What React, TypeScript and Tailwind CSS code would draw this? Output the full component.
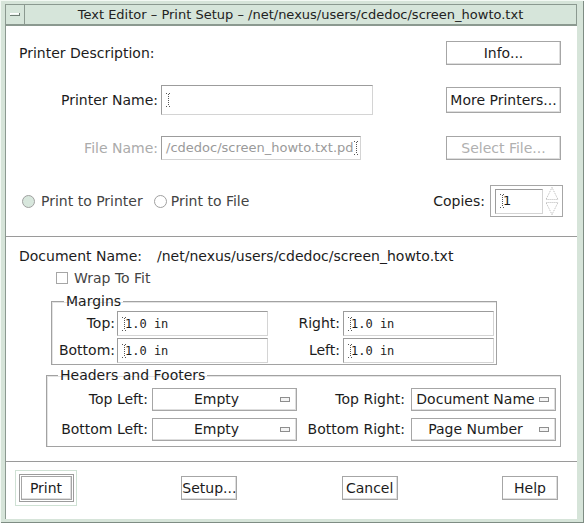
import React from "react";

const sans = "font-['DejaVu_Sans',sans-serif]";
const mono = "font-['DejaVu_Sans_Mono',monospace]";

function Caret() {
  return (
    <svg width="5" height="14" viewBox="0 0 5 14" className="shrink-0">
      <path d="M0 0.5h2M3 0.5h2M2.5 1v12M0 13.5h2M3 13.5h2" stroke="#555" strokeWidth="1" strokeDasharray="1 1" fill="none" />
    </svg>
  );
}

function Btn({ children, className = "", disabled = false }: { children: React.ReactNode; className?: string; disabled?: boolean }) {
  return (
    <div
      className={`flex items-center justify-center border border-[#a6a6a6] bg-white text-[14px] shadow-[inset_-1px_-1px_0_#dedede] ${
        disabled ? "text-[#b0b0b0]" : "text-[#1c1c1c]"
      } ${className}`}
    >
      {children}
    </div>
  );
}

function Field({ children, className = "" }: { children?: React.ReactNode; className?: string }) {
  return (
    <div
      className={`flex items-center overflow-hidden border border-t-[#9c9c9c] border-l-[#9c9c9c] border-r-[#d4d4d4] border-b-[#d4d4d4] bg-white pl-[4px] ${className}`}
    >
      {children}
    </div>
  );
}

function MarginField({ value }: { value: string }) {
  return (
    <Field className="h-[25px] w-[151px]">
      <Caret />
      <span className={`${mono} -ml-[2px] text-[12px] text-[#1c1c1c]`}>{value}</span>
    </Field>
  );
}

function OptionMenu({ value }: { value: string }) {
  return (
    <div className="flex h-[23px] w-[145px] items-center border border-[#a6a6a6] bg-white pr-[6px] shadow-[inset_-1px_-1px_0_#dedede]">
      <span className="flex-1 text-center text-[14px] text-[#1c1c1c]">{value}</span>
      <span className="h-[5px] w-[10px] border border-[#8e8e8e] bg-[#f4f4f4]" />
    </div>
  );
}

function Group({
  title,
  className = "",
  legendClass = "",
  children,
}: {
  title: string;
  className?: string;
  legendClass?: string;
  children: React.ReactNode;
}) {
  return (
    <fieldset className={`border border-[#a2a2a2] shadow-[inset_1px_1px_0_#e4e4e4] ${className}`}>
      <legend className={`px-[2px] text-[14px] leading-[16px] text-[#1c1c1c] ${legendClass}`}>{title}</legend>
      {children}
    </fieldset>
  );
}

export default function App() {
  return (
    <div
      className={`${sans} flex h-[523px] w-[584px] flex-col bg-[#d6e4d9] pb-[4px] pl-[5px] pr-[7px] pt-[4px] text-[#1c1c1c] shadow-[inset_1px_1px_0_#f3f9f4,inset_-1px_-1px_0_#7e8c83]`}
    >
      {/* title bar */}
      <div className="flex h-[21px] shrink-0 border border-[#8b9990] bg-[#d6e5da]">
        <div className="flex w-[19px] items-center justify-center border-r border-[#8b9990]">
          <span className="h-[3px] w-[10px] border-b border-r border-[#6f7d74] bg-[#eef5f0] shadow-[inset_1px_1px_0_#ffffff]" />
        </div>
        <div className="flex flex-1 items-center justify-center text-[13px] leading-none text-[#222]">
          Text Editor – Print Setup – /net/nexus/users/cdedoc/screen_howto.txt
        </div>
      </div>

      {/* content */}
      <div className="flex flex-1 flex-col border-l border-t border-[#8b9990] bg-white">
        <div className="flex flex-col pl-[13px] pr-[16px]">
          <div className="mt-[15px] flex h-[24px] items-center justify-between">
            <span className="text-[14px]">Printer Description:</span>
            <Btn className="h-[24px] w-[115px]">Info...</Btn>
          </div>

          <div className="mt-[20px] flex h-[30px] items-center">
            <span className="w-[139px] text-right text-[14px]">Printer Name:</span>
            <Field className="ml-[3px] h-[30px] w-[212px] pl-[3px]">
              <Caret />
            </Field>
            <Btn className="ml-auto h-[26px] w-[115px]">More Printers...</Btn>
          </div>

          <div className="mt-[21px] flex h-[24px] items-center">
            <span className="w-[139px] text-right text-[14px] text-[#ababab]">File Name:</span>
            <Field className="ml-[3px] h-[24px] w-[200px]">
              <span className="whitespace-nowrap text-[13px] text-[#9a9a9a]">/cdedoc/screen_howto.txt.pd</span>
              <Caret />
            </Field>
            <Btn disabled className="ml-auto h-[24px] w-[115px]">
              Select File...
            </Btn>
          </div>

          <div className="mt-[25px] flex h-[32px] items-center">
            <span className="ml-[3px] h-[13px] w-[13px] rounded-full border border-[#a0a0a0] bg-[#d8e7dd]" />
            <span className="ml-[6px] text-[14px] text-[#444]">Print to Printer</span>
            <span className="ml-[11px] h-[13px] w-[13px] rounded-full border border-[#a0a0a0] bg-white" />
            <span className="ml-[4px] text-[14px] text-[#444]">Print to File</span>
            <span className="ml-auto text-[14px]">Copies:</span>
            <div className="-mr-[2px] ml-[5px] flex h-[32px] w-[73px] items-center border border-[#a6a6a6] pl-[4px]">
              <Field className="h-[25px] w-[48px] pl-[3px]">
                <Caret />
                <span className="-ml-[2px] text-[13px]">1</span>
              </Field>
              <svg width="14" height="30" viewBox="0 0 14 30" className="ml-[2px]">
                <path d="M7 1.5L13 13.5H1Z M7 28.5L13 16.5H1Z" fill="none" stroke="#b8b8b8" strokeDasharray="1 1" />
              </svg>
            </div>
          </div>
        </div>

        <div className="mt-[19px] h-[2px] border-t border-[#9a9a9a] bg-white" />

        <div className="flex flex-col pl-[13px]">
          <div className="mt-[10px] flex h-[16px] items-center text-[14px]">
            <span className="w-[138px]">Document Name:</span>
            <span>/net/nexus/users/cdedoc/screen_howto.txt</span>
          </div>
          <div className="mt-[6px] flex h-[16px] items-center pl-[37px]">
            <span className="h-[12px] w-[12px] border border-[#a6a6a6]" />
            <span className="ml-[6px] text-[14px] text-[#444]">Wrap To Fit</span>
          </div>

          <Group title="Margins" legendClass="ml-[12px]" className="ml-[32px] mt-[7px] w-[446px] pb-[1px] pl-0 pt-[2px]">
            <div className="flex flex-col gap-[2px]">
              <div className="flex items-center">
                <span className="w-[63px] text-right text-[14px]">Top:</span>
                <span className="ml-[2px]">
                  <MarginField value="1.0 in" />
                </span>
                <span className="w-[72px] text-right text-[14px]">Right:</span>
                <span className="ml-[3px]">
                  <MarginField value="1.0 in" />
                </span>
              </div>
              <div className="flex items-center">
                <span className="w-[63px] text-right text-[14px]">Bottom:</span>
                <span className="ml-[2px]">
                  <MarginField value="1.0 in" />
                </span>
                <span className="w-[72px] text-right text-[14px]">Left:</span>
                <span className="ml-[3px]">
                  <MarginField value="1.0 in" />
                </span>
              </div>
            </div>
          </Group>

          <Group
            title="Headers and Footers"
            legendClass="ml-[11px]"
            className="ml-[27px] mt-[2px] w-[515px] pb-[5px] pt-[5px]"
          >
            <div className="flex flex-col gap-[7px]">
              <div className="flex items-center">
                <span className="w-[101px] text-right text-[14px]">Top Left:</span>
                <span className="ml-[4px]">
                  <OptionMenu value="Empty" />
                </span>
                <span className="w-[108px] text-right text-[14px]">Top Right:</span>
                <span className="ml-[6px]">
                  <OptionMenu value="Document Name" />
                </span>
              </div>
              <div className="flex items-center">
                <span className="w-[101px] text-right text-[14px]">Bottom Left:</span>
                <span className="ml-[4px]">
                  <OptionMenu value="Empty" />
                </span>
                <span className="w-[108px] text-right text-[14px]">Bottom Right:</span>
                <span className="ml-[6px]">
                  <OptionMenu value="Page Number" />
                </span>
              </div>
            </div>
          </Group>
        </div>

        <div className="mt-[14px] h-[2px] border-t border-[#9a9a9a] bg-white" />

        <div className="mt-[7px] flex items-center justify-between pl-[9px] pr-[19px]">
          <div className="flex h-[36px] w-[62px] items-center justify-center border border-[#cfe1d4]">
            <div className="border border-[#9c9c9c] p-[1px]">
              <Btn className="h-[24px] w-[51px]">Print</Btn>
            </div>
          </div>
          <Btn className="h-[24px] w-[56px]">Setup...</Btn>
          <Btn className="h-[24px] w-[56px]">Cancel</Btn>
          <Btn className="h-[24px] w-[56px]">Help</Btn>
        </div>
      </div>
    </div>
  );
}
